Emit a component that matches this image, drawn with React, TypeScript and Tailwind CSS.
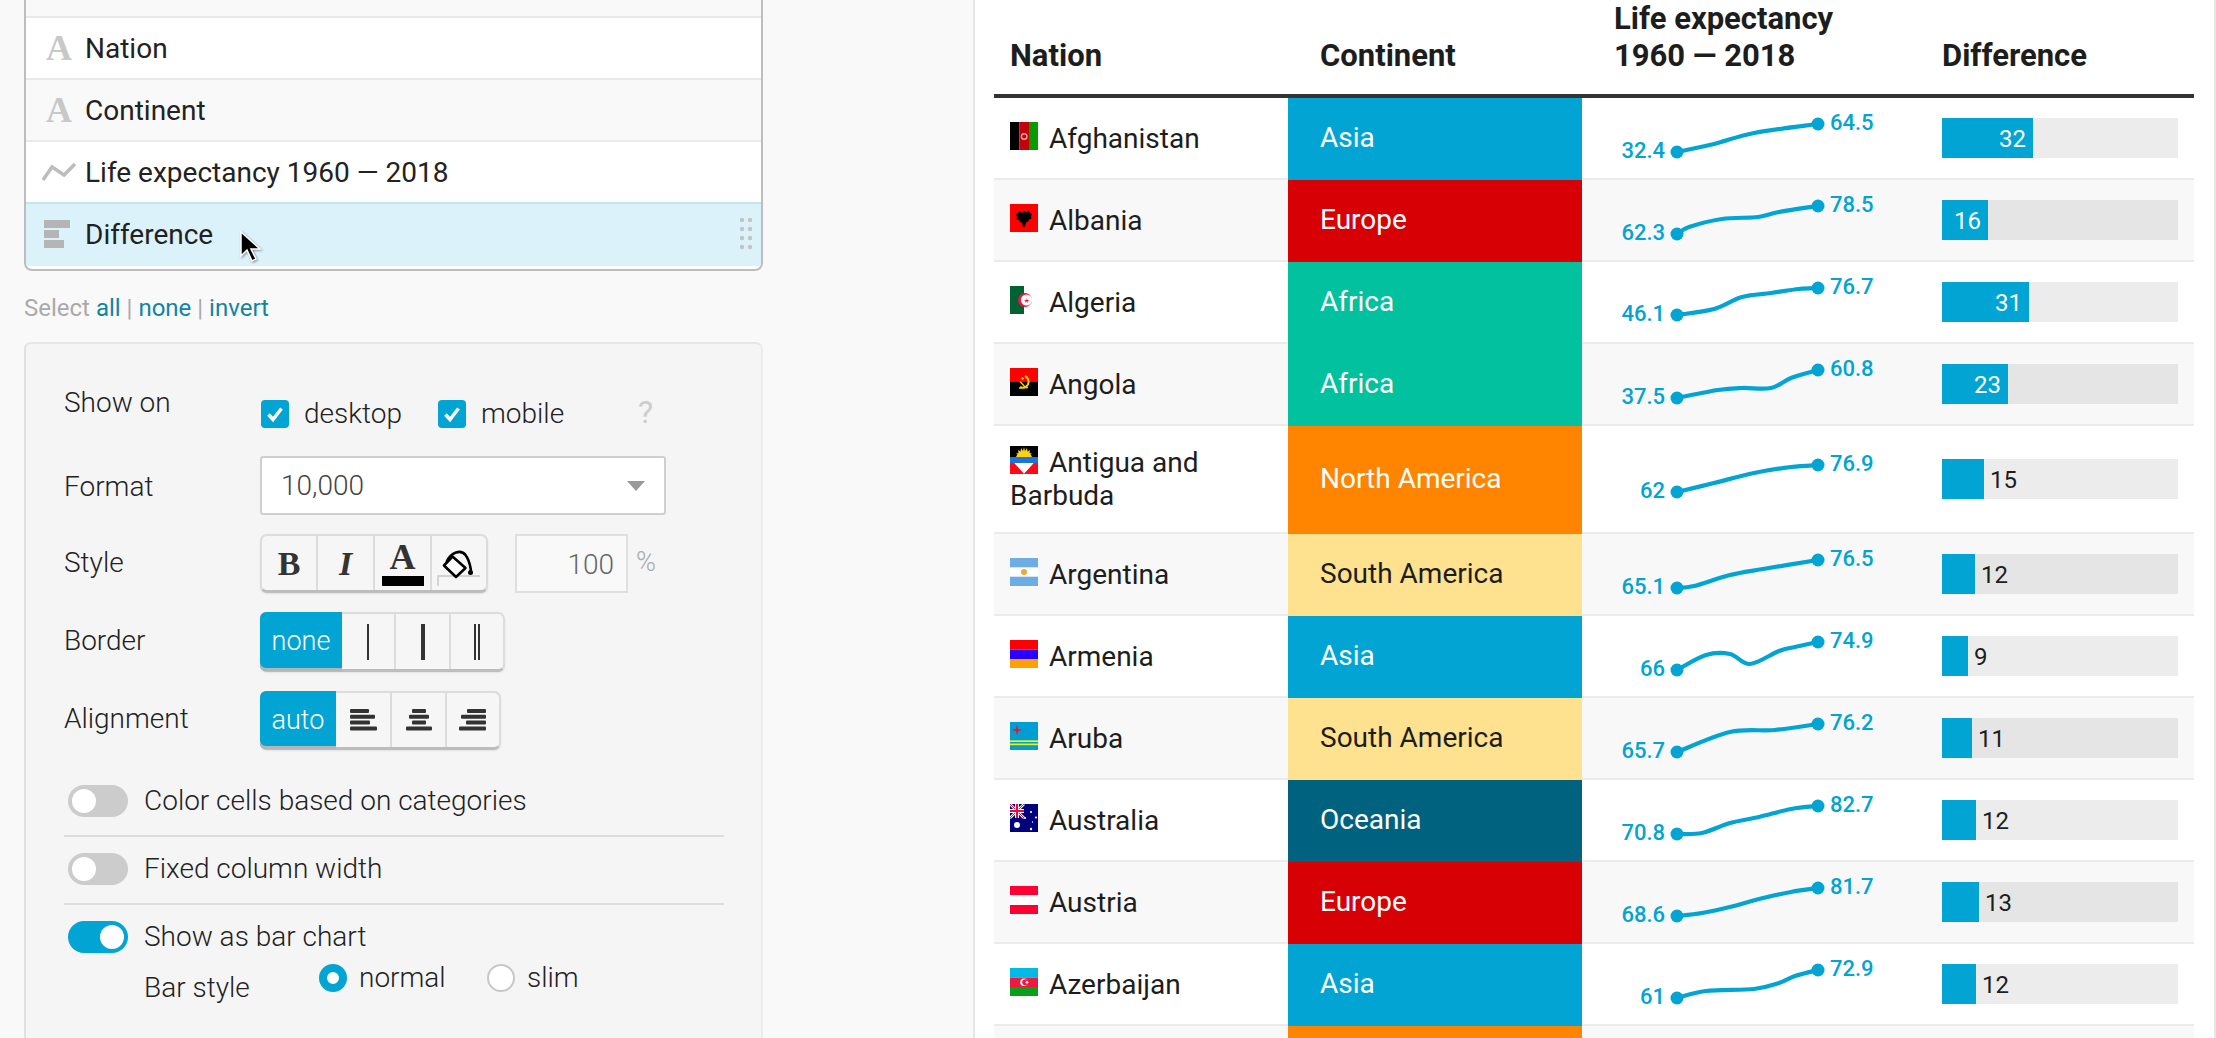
import type { ReactNode } from 'react';

const BLUE = '#01a4d3';

type Row = {
  name: string;
  continent: keyof typeof CONTINENTS;
  from: string;
  to: string;
  line: number[][];
  diff: string;
  bar: number;
  tall?: boolean;
};

const CONTINENTS = {
  Asia: 'bg-[#01a4d3] text-white',
  Europe: 'bg-[#d70005] text-white',
  Africa: 'bg-[#01c19f] text-white',
  'North America': 'bg-[#ff8500] text-white',
  'South America': 'bg-[#fee28f] text-[#1d1d1d]',
  Oceania: 'bg-[#00627f] text-white',
};

const ROWS: Row[] = [
  { name: 'Afghanistan', continent: 'Asia', from: '32.4', to: '64.5', diff: '32', bar: 91, line: [[95, 54], [132, 46], [172, 35], [236, 26]] },
  { name: 'Albania', continent: 'Europe', from: '62.3', to: '78.5', diff: '16', bar: 46, line: [[95, 54], [107, 47], [140, 39], [176, 37], [197, 32], [236, 26]] },
  { name: 'Algeria', continent: 'Africa', from: '46.1', to: '76.7', diff: '31', bar: 87, line: [[95, 53], [132, 47], [160, 35], [189, 31], [217, 27], [236, 26]] },
  { name: 'Angola', continent: 'Africa', from: '37.5', to: '60.8', diff: '23', bar: 66, line: [[95, 54], [136, 46], [160, 44], [189, 44], [209, 34], [236, 26]] },
  { name: 'Antigua and Barbuda', continent: 'North America', from: '62', to: '76.9', diff: '15', bar: 42, tall: true, line: [[95, 66], [132, 57], [172, 47], [209, 41], [236, 39]] },
  { name: 'Argentina', continent: 'South America', from: '65.1', to: '76.5', diff: '12', bar: 33, line: [[95, 54], [112, 52], [148, 41], [181, 35], [236, 26]] },
  { name: 'Armenia', continent: 'Asia', from: '66', to: '74.9', diff: '9', bar: 26, line: [[95, 54], [124, 39], [148, 38], [168, 48], [197, 35], [213, 31], [236, 26]] },
  { name: 'Aruba', continent: 'South America', from: '65.7', to: '76.2', diff: '11', bar: 30, line: [[95, 54], [148, 34], [193, 32], [236, 26]] },
  { name: 'Australia', continent: 'Oceania', from: '70.8', to: '82.7', diff: '12', bar: 34, line: [[95, 54], [120, 53], [148, 43], [177, 37], [209, 29], [236, 26]] },
  { name: 'Austria', continent: 'Europe', from: '68.6', to: '81.7', diff: '13', bar: 37, line: [[95, 54], [120, 51], [152, 44], [177, 37], [209, 30], [236, 26]] },
  { name: 'Azerbaijan', continent: 'Asia', from: '61', to: '72.9', diff: '12', bar: 34, line: [[95, 54], [124, 47], [172, 45], [197, 39], [213, 32], [236, 26]] },
];

// catmull-rom through the sampled points
function smooth(p: number[][]) {
  let d = `M${p[0][0]} ${p[0][1]}`;
  for (let i = 0; i < p.length - 1; i++) {
    const a = p[i - 1] || p[i];
    const b = p[i];
    const c = p[i + 1];
    const e = p[i + 2] || c;
    d += `C${b[0] + (c[0] - a[0]) / 6} ${b[1] + (c[1] - a[1]) / 6} ${c[0] - (e[0] - b[0]) / 6} ${c[1] - (e[1] - b[1]) / 6} ${c[0]} ${c[1]}`;
  }
  return d;
}

function Flag({ name }: { name: string }) {
  let art: ReactNode = null;
  if (name === 'Afghanistan') {
    art = (
      <>
        <rect width="9.5" height="28" fill="#000" />
        <rect x="9.5" width="9.5" height="28" fill="#c4000b" />
        <rect x="19" width="9" height="28" fill="#079b00" />
        <circle cx="14.2" cy="14.5" r="2.8" fill="none" stroke="#f0a0a0" strokeWidth="1.4" />
      </>
    );
  } else if (name === 'Albania') {
    art = (
      <>
        <rect width="28" height="28" fill="#ff0000" />
        <path d="M14 6l1.500 2.500 4-2 .5 2.500 2 .5-1 3 .5 2-2.500 1-1 2.500-1.500-.5L15.500 21 14 23.500 12.500 21 11.500 18l-1.500.5-1-2.500-2.500-1 .5-2-1-3 2-.5.5-2.500 4 2z" fill="#000" />
      </>
    );
  } else if (name === 'Algeria') {
    art = (
      <>
        <rect width="14" height="28" fill="#006233" />
        <rect x="14" width="14" height="28" fill="#fff" />
        <circle cx="15" cy="14" r="7" fill="#e8173f" />
        <circle cx="16.500" cy="14" r="5.600" fill="#fff" />
        <path d="M14 14h2.500V12l1 2h2.500l-2.500 1 .5 2-1.500-1.500L15 17l.5-2z" fill="#e8173f" />
      </>
    );
  } else if (name === 'Angola') {
    art = (
      <>
        <rect width="28" height="14" fill="#ff0000" />
        <rect y="14" width="28" height="14" fill="#000" />
        <path d="M15 8a6.500 6.500 0 0 1 3 8.500 6.500 6.500 0 0 1-8 2.500" fill="none" stroke="#ffcb00" strokeWidth="2" />
        <path d="M10 13.500l6 6.500M9 20l9-.5" stroke="#ffcb00" strokeWidth="1.400" />
        <circle cx="12.500" cy="10.500" r="1.300" fill="#ffcb00" />
      </>
    );
  } else if (name === 'Antigua and Barbuda') {
    art = (
      <>
        <rect width="28" height="28" fill="#ff0a17" />
        <path d="M0 0h28v11H0z" fill="#000" />
        <path d="M0 11h28v6H0z" fill="#1e73d8" />
        <path d="M4 17h20L14 28z" fill="#fff" />
        <path d="M0 17h4l10 11H0zM28 17h-4L14 28h14z" fill="#ff0a17" />
        <path d="M6 11l1.500-3-2-.5 3-.5L8 4l2.500 1.500L11 2l2 3 1-4 1 4 2-3 .5 3.500L20 4l-.5 3 3 .5-2 .5L22 11z" fill="#fcd116" />
      </>
    );
  } else if (name === 'Argentina') {
    art = (
      <>
        <rect width="28" height="28" fill="#6cade4" />
        <rect y="9.300" width="28" height="9.400" fill="#fff" />
        <circle cx="14" cy="14" r="3" fill="#eda63a" />
      </>
    );
  } else if (name === 'Armenia') {
    art = (
      <>
        <rect width="28" height="9.500" fill="#ff0000" />
        <rect y="9.500" width="28" height="9.500" fill="#2a00ff" />
        <rect y="19" width="28" height="9" fill="#ffa100" />
      </>
    );
  } else if (name === 'Aruba') {
    art = (
      <>
        <rect width="28" height="28" fill="#009ed3" />
        <rect y="18.300" width="28" height="1.700" fill="#f4f000" />
        <rect y="21.500" width="28" height="1.700" fill="#f4f000" />
        <path d="M7 2.500l1 4.500 4.500 1L8 9l-1 4.500L6 9 1.500 8 6 7z" fill="#f01020" />
      </>
    );
  } else if (name === 'Australia') {
    art = (
      <>
        <rect width="28" height="28" fill="#00007f" />
        <path d="M0 0l14 14M14 0L0 14" stroke="#fff" strokeWidth="2.500" />
        <path d="M0 0l14 14M14 0L0 14" stroke="#e0103c" strokeWidth="1" />
        <path d="M7 0v14M0 7h14" stroke="#fff" strokeWidth="4" />
        <path d="M7 0v14M0 7h14" stroke="#e0103c" strokeWidth="2.200" />
        <circle cx="7" cy="21" r="3" fill="#fff" />
        <circle cx="21" cy="8" r="1.100" fill="#fff" />
        <circle cx="15" cy="14" r="1.100" fill="#fff" />
        <circle cx="26" cy="13.500" r="1.100" fill="#fff" />
        <circle cx="22.500" cy="18" r=".7" fill="#fff" />
        <circle cx="21" cy="25" r="1.200" fill="#fff" />
      </>
    );
  } else if (name === 'Austria') {
    art = (
      <>
        <rect width="28" height="9" fill="#ff0033" />
        <rect y="9" width="28" height="10" fill="#fff" />
        <rect y="19" width="28" height="9" fill="#ff0033" />
      </>
    );
  } else if (name === 'Azerbaijan') {
    art = (
      <>
        <rect width="28" height="9.500" fill="#00b9e4" />
        <rect y="9.500" width="28" height="9.500" fill="#ee1a3e" />
        <rect y="19" width="28" height="9" fill="#07a01c" />
        <circle cx="14" cy="14.300" r="3.800" fill="#fff" />
        <circle cx="15.200" cy="14.300" r="3" fill="#ee1a3e" />
        <circle cx="17" cy="14.300" r="1.300" fill="#fff" />
      </>
    );
  }
  return (
    <svg width="28" height="28" viewBox="0 0 28 28" className="inline-block align-[-2px] mr-[11px]">
      {art}
    </svg>
  );
}

function Spark({ row }: { row: Row }) {
  const h = row.tall ? 106 : 80;
  const first = row.line[0];
  const last = row.line[row.line.length - 1];
  return (
    <svg width="344" height={h} className="block [font-family:Roboto,sans-serif]">
      <path d={smooth(row.line)} fill="none" stroke={BLUE} strokeWidth="4.200" strokeLinecap="round" />
      <circle cx={first[0]} cy={first[1]} r="6.500" fill={BLUE} />
      <circle cx={last[0]} cy={last[1]} r="6.500" fill={BLUE} />
      <text x="83" y={first[1] + 6} textAnchor="end" fontSize="22" fontWeight="500" fill={BLUE}>{row.from}</text>
      <text x="248" y={last[1] + 6} fontSize="22" fontWeight="500" fill={BLUE}>{row.to}</text>
    </svg>
  );
}

function DiffBar({ row }: { row: Row }) {
  const inside = row.bar > 40 && row.diff !== '15';
  return (
    <div className="flex h-[40px] w-[236px] bg-black/[0.075] text-[24px] leading-[43px]">
      <div className={`h-full bg-[#01a4d3] text-right text-white ${inside ? 'pr-[7px]' : ''}`} style={{ width: row.bar }}>
        {inside ? row.diff : ''}
      </div>
      {!inside && <span className="pl-[6px] text-[#1d1d1d]">{row.diff}</span>}
    </div>
  );
}

function TableRow({ row, even }: { row: Row; even: boolean }) {
  return (
    <div className={`flex text-[28px] ${row.tall ? 'h-[108px]' : 'h-[82px]'} ${even ? 'bg-[#f8f8f8]' : 'bg-white'}`}>
      <div className="flex w-[294px] items-center border-b-2 border-[#ebebeb] pl-[16px] pr-[8px] leading-[33px] text-[#1d1d1d]">
        <div>
          <Flag name={row.name} />
          {row.name}
        </div>
      </div>
      <div className={`flex w-[294px] items-center pb-[2px] pl-[32px] ${CONTINENTS[row.continent]}`}>{row.continent}</div>
      <div className="w-[344px] border-b-2 border-[#ebebeb]">
        <Spark row={row} />
      </div>
      <div className="flex flex-1 items-center border-b-2 border-[#ebebeb] pl-[16px]">
        <DiffBar row={row} />
      </div>
    </div>
  );
}

function ListRow({ icon, label, className, children }: { icon: ReactNode; label: string; className: string; children?: ReactNode }) {
  return (
    <div className={`relative flex h-[62px] items-center border-b-2 ${className}`}>
      <div className="flex w-[59px] justify-center">{icon}</div>
      <span className="pt-[2px] text-[28px] text-[#222]">{label}</span>
      {children}
    </div>
  );
}

function SerifA() {
  return <span className="pl-[7px] text-[36px] font-bold leading-none text-[#c8c8c8] [font-family:'Liberation_Serif',serif]">A</span>;
}

function Segment({ className, active, children }: { className: string; active?: boolean; children: ReactNode }) {
  return (
    <div
      className={`flex items-center justify-center ${className} ${
        active
          ? '-my-[2px] -ml-[2px] rounded-l-[6px] bg-[#01a4d3] text-[27px] text-white shadow-[inset_0_-3px_0_#b5b5b5] [font-family:\'Liberation_Sans\',sans-serif]'
          : 'border-r-2 border-[#dcdcdc] last:border-r-0'
      }`}
    >
      {children}
    </div>
  );
}

function Group({ className, children }: { className: string; children: ReactNode }) {
  return (
    <div className={`flex rounded-[7px] border-2 border-b-[3px] border-[#dcdcdc] border-b-[#bdbdbd] bg-[#f6f6f6] shadow-[0_1px_2px_rgba(0,0,0,0.08)] ${className}`}>
      {children}
    </div>
  );
}

function AlignIcon({ lines }: { lines: number[][] }) {
  return (
    <svg width="28" height="24" viewBox="0 0 28 24">
      {lines.map(([x, w], i) => (
        <rect key={i} x={x} y={1 + i * 5.800} width={w} height="4" rx="1" fill="#333" />
      ))}
    </svg>
  );
}

function Toggle({ on }: { on?: boolean }) {
  return (
    <div className={`flex h-[32px] w-[60px] shrink-0 items-center rounded-full px-[4px] ${on ? 'justify-end bg-[#01a4d3]' : 'bg-[#cccccc]'}`}>
      <div className="h-[24px] w-[24px] rounded-full bg-white" />
    </div>
  );
}

function Check() {
  return (
    <div className="flex h-[28px] w-[28px] items-center justify-center rounded-[4px] bg-[#01a4d3]">
      <svg width="20" height="20" viewBox="0 0 20 20" fill="none">
        <path d="M3.500 10.500l4.500 5 8.500-11" stroke="#fff" strokeWidth="3.400" />
      </svg>
    </div>
  );
}

export default function App() {
  return (
    <div className="flex h-[1038px] w-full overflow-hidden bg-white font-light [font-family:Roboto,sans-serif]">
      {/* Left Column - Settings */}
      <div className="h-full w-[975px] shrink-0 border-r-2 border-[#e6e6e6] bg-[#f9f9f9] px-[24px]">
        <div className="w-[739px] overflow-hidden rounded-b-[8px] border-x-2 border-b-2 border-[#bdbdbd] bg-white pb-[3px] font-normal">
          <div className="h-[18px] border-b-2 border-[#e9e9e9] bg-[#f9f9f9]" />
          <ListRow icon={<SerifA />} label="Nation" className="border-[#e9e9e9] bg-white" />
          <ListRow icon={<SerifA />} label="Continent" className="border-[#e9e9e9] bg-[#f9f9f9]" />
          <ListRow
            icon={
              <svg width="36" height="20" viewBox="0 0 36 20" fill="none" className="ml-[7px]">
                <path d="M2 18l9-13 12 8L34 2" stroke="#bdbdbd" strokeWidth="3.500" />
              </svg>
            }
            label="Life expectancy 1960 — 2018"
            className="border-[#c6e4ee] bg-white"
          />
          <ListRow
            icon={
              <svg width="26" height="28" viewBox="0 0 26 28" className="ml-[2px]" fill="#b5b5b5">
                <rect width="26" height="8" />
                <rect y="10" width="15" height="8" />
                <rect y="20" width="20" height="8" />
              </svg>
            }
            label="Difference"
            className="border-transparent bg-[#dcf2fa]"
          >
            <svg width="12" height="32" viewBox="0 0 12 32" fill="#c4c4c4" className="absolute right-[9px] top-[14px]">
              {[2, 11, 20, 29].map((y) => (
                <g key={y}>
                  <circle cx="2" cy={y} r="2.200" />
                  <circle cx="10" cy={y} r="2.200" />
                </g>
              ))}
            </svg>
            {/* mouse pointer */}
            <svg width="24" height="34" viewBox="0 0 24 34" className="absolute left-[213px] top-[27px] drop-shadow-[1px_1px_1px_rgba(0,0,0,0.4)]">
              <path d="M2 1v24l6-6 5 11 4-2-5-10h9z" fill="#000" stroke="#fff" strokeWidth="1.500" />
            </svg>
          </ListRow>
        </div>

        <p className="mt-[24px] h-[26px] text-[24px] font-normal leading-[26px] text-[#aaaaaa]">
          Select <span className="text-[#1284a3]">all</span> | <span className="text-[#1284a3]">none</span> |{' '}
          <span className="text-[#1284a3]">invert</span>
        </p>

        <div className="mt-[21px] h-[800px] w-[739px] rounded-[7px] border-2 border-t-[#e6e6e6] border-l-[#e0e0e0] border-r-[#ececec] border-b-[#ececec] bg-[#f5f5f5] pl-[38px] pr-[37px] pt-[40px] text-[28px] text-[#222]">
          <div className="flex h-[48px]">
            <div className="mt-[1px] h-[35px] w-[196px] leading-[36px]">Show on</div>
            <div className="ml-[1px] mt-[12px] flex h-[36px] items-center">
              <Check />
              <span className="ml-[15px] w-[134px]">desktop</span>
              <Check />
              <span className="ml-[15px] w-[157px]">mobile</span>
              <span className="-mt-[4px] text-[32px] font-normal text-[#cccccc]">?</span>
            </div>
          </div>

          <div className="mt-[24px] flex h-[59px] items-center">
            <div className="mt-[2px] w-[196px]">Format</div>
            <div className="flex h-[59px] w-[406px] items-center justify-between rounded-[3px] border-2 border-[#cfcfcf] bg-white pl-[19px] pr-[19px] text-[#444]">
              10,000
              <svg width="18" height="10" viewBox="0 0 18 10">
                <path d="M0 0h18l-9 10z" fill="#999" />
              </svg>
            </div>
          </div>

          <div className="mt-[19px] flex h-[59px] items-center">
            <div className="-mt-[2px] w-[196px]">Style</div>
            <Group className="h-[59px] w-[228px] text-[#333] [font-family:'Liberation_Serif',serif]">
              <Segment className="w-[56px] text-[34px] font-bold">B</Segment>
              <Segment className="w-[57px] text-[34px] font-bold italic">I</Segment>
              <Segment className="w-[57px] flex-col">
                <span className="text-[36px] font-bold leading-[32px]">A</span>
                <span className="mt-[3px] h-[10px] w-[42px] bg-black" />
              </Segment>
              <Segment className="flex-1">
                <svg width="44" height="40" viewBox="0 0 44 40" fill="none" className="mt-[10px]">
                  <path d="M1 38V28h42" stroke="#d4d4d4" strokeWidth="2" />
                  <path d="M7 17.500l8.500-9 13 11.500-9.500 9z" fill="#fff" stroke="#000" strokeWidth="2.600" strokeLinejoin="round" />
                  <path d="M9.500 14C14 4 24 1 28.500 7S33 17 34 23" stroke="#000" strokeWidth="2.600" />
                  <circle cx="33.500" cy="24.500" r="2.500" fill="#000" />
                </svg>
              </Segment>
            </Group>
            <div className="ml-[27px] flex h-[59px] w-[113px] items-center justify-end border-2 border-[#dfdfdf] bg-[#f9f9f9] pr-[12px] pt-[3px] text-[#666]">100</div>
            <span className="-mt-[2px] ml-[8px] text-[27px] text-[#aaaaaa]">%</span>
          </div>

          <div className="mt-[19px] flex h-[60px] items-center">
            <div className="-mt-[2px] w-[196px]">Border</div>
            <Group className="h-[60px] w-[245px]">
              <Segment active className="w-[82px]">none</Segment>
              <Segment className="w-[54px]"><span className="h-[36px] w-[2px] bg-[#333]" /></Segment>
              <Segment className="w-[55px]"><span className="h-[36px] w-[4px] bg-[#333]" /></Segment>
              <Segment className="flex-1 gap-[2px]">
                <span className="h-[36px] w-[2px] bg-[#333]" />
                <span className="h-[36px] w-[2px] bg-[#333]" />
              </Segment>
            </Group>
          </div>

          <div className="mt-[19px] flex h-[59px] items-center">
            <div className="-mt-[4px] w-[196px]">Alignment</div>
            <Group className="h-[59px] w-[241px]">
              <Segment active className="w-[76px]">auto</Segment>
              <Segment className="w-[56px]"><AlignIcon lines={[[1, 19], [1, 25], [1, 20], [1, 27]]} /></Segment>
              <Segment className="w-[55px]"><AlignIcon lines={[[7, 14], [4, 20], [7, 14], [1, 26]]} /></Segment>
              <Segment className="flex-1"><AlignIcon lines={[[8, 19], [2, 25], [7, 20], [0, 27]]} /></Segment>
            </Group>
          </div>

          <div className="mt-[35px] flex h-[52px] items-start gap-[16px] border-b-2 border-[#dddddd] pl-[4px]">
            <Toggle />
            <span className="leading-[32px]">Color cells based on categories</span>
          </div>
          <div className="mt-[16px] flex h-[52px] items-start gap-[16px] border-b-2 border-[#dddddd] pl-[4px]">
            <Toggle />
            <span className="leading-[32px]">Fixed column width</span>
          </div>
          <div className="mt-[16px] flex items-start gap-[16px] pl-[4px]">
            <Toggle on />
            <span className="leading-[32px]">Show as bar chart</span>
          </div>
          <div className="mt-[11px] flex pl-[80px]">
            <span className="mt-[8px] w-[175px] leading-[32px]">Bar style</span>
            <div className="flex h-[28px] items-center">
              <span className="h-[28px] w-[28px] rounded-full border-[8px] border-[#01a4d3] bg-white" />
              <span className="ml-[12px] w-[128px]">normal</span>
              <span className="h-[28px] w-[28px] rounded-full border-2 border-[#c8c8c8] bg-white" />
              <span className="ml-[12px]">slim</span>
            </div>
          </div>
        </div>
      </div>

      {/* Right Column - Table */}
      <div className="h-full flex-1 border-r-2 border-[#e6e6e6] pl-[19px]">
        <div className="w-[1200px] font-normal">
          <div className="flex h-[98px] items-end border-b-4 border-[#333] pb-[20px] text-[31px] font-bold leading-[37px] text-[#1d1d1d]">
            <div className="w-[294px] pl-[16px]">Nation</div>
            <div className="w-[294px] pl-[32px]">Continent</div>
            <div className="w-[360px] pl-[32px]">
              Life expectancy
              <br />
              1960 — 2018
            </div>
            <div>Difference</div>
          </div>
          {ROWS.map((row, i) => (
            <TableRow key={row.name} row={row} even={i % 2 === 1} />
          ))}
          <div className="flex h-[12px] bg-[#f8f8f8]">
            <div className="ml-[294px] w-[294px] bg-[#ff8500]" />
          </div>
        </div>
      </div>
    </div>
  );
}
